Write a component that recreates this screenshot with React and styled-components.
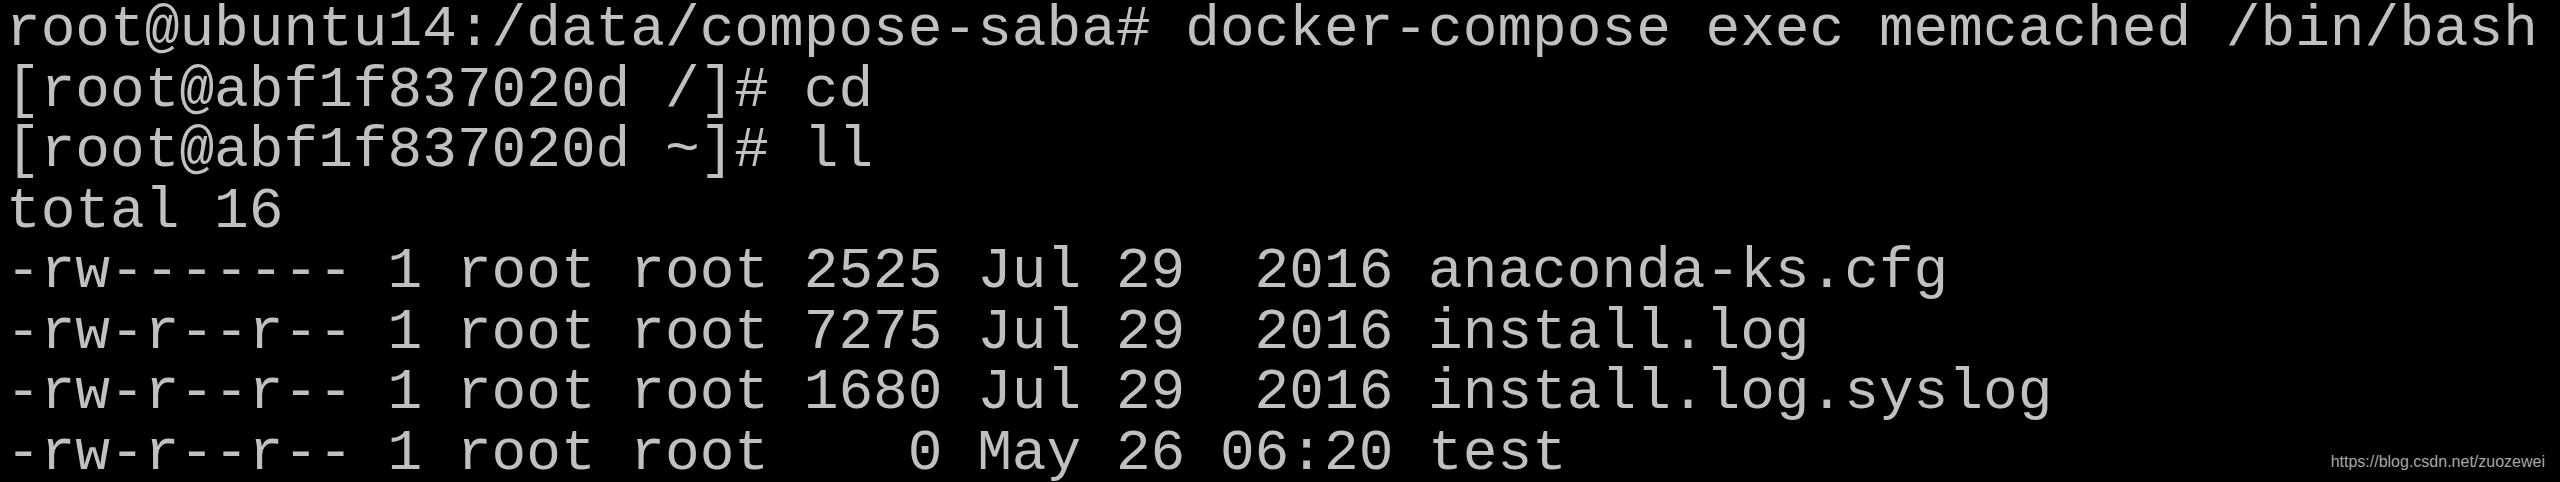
import React from "react";
import styled, { createGlobalStyle } from "styled-components";

const lines = [
  "root@ubuntu14:/data/compose-saba# docker-compose exec memcached /bin/bash",
  "[root@abf1f837020d /]# cd",
  "[root@abf1f837020d ~]# ll",
  "total 16",
  "-rw------- 1 root root 2525 Jul 29  2016 anaconda-ks.cfg",
  "-rw-r--r-- 1 root root 7275 Jul 29  2016 install.log",
  "-rw-r--r-- 1 root root 1680 Jul 29  2016 install.log.syslog",
  "-rw-r--r-- 1 root root    0 May 26 06:20 test",
];

function App() {
  return (
    <>
      <GlobalStyle />
      <Screen>
        <Output>
          {lines.map((line, i) => (
            <Line key={i}>{line}</Line>
          ))}
        </Output>
        <Watermark>https://blog.csdn.net/zuozewei</Watermark>
      </Screen>
    </>
  );
}

const GlobalStyle = createGlobalStyle`
  html, body {
    margin: 0;
    padding: 0;
    background: #000;
  }
`;

const Screen = styled.div`
  position: relative;
  width: 2560px;
  height: 482px;
  overflow: hidden;
  background: #000;
`;

const Output = styled.div`
  display: flex;
  flex-direction: column;
  padding-left: 6px;
`;

const Line = styled.div`
  white-space: pre;
  font-family: "Liberation Mono", "DejaVu Sans Mono", monospace;
  font-size: 57.8px;
  line-height: 60.5px;
  color: #c0c0c0;
`;

// csdn watermark sits on top of the last line
const Watermark = styled.span`
  position: absolute;
  top: 454px;
  right: 15px;
  font-family: "Liberation Sans", Arial, sans-serif;
  font-size: 16px;
  line-height: 16px;
  color: #a8a8a8;
`;

export default App;
